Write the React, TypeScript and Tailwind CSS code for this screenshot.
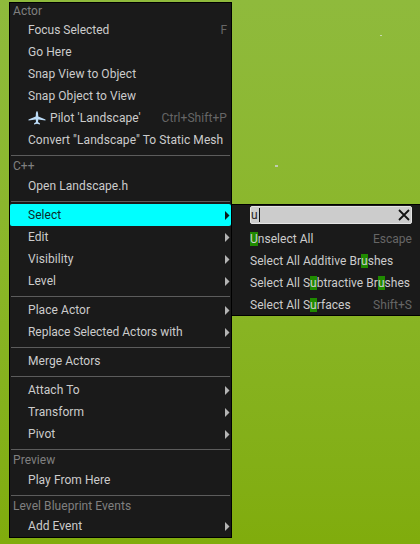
const font = "font-['Roboto','Liberation_Sans',sans-serif]";

function Arrow({ dark = false }: { dark?: boolean }) {
  return (
    <svg width="5" height="9" viewBox="0 0 5 9" className="absolute left-[215px] top-[7px]">
      <path d="M0 0 L4.5 4.5 L0 9 Z" fill={dark ? "#0a1a1a" : "#b4b4b4"} />
    </svg>
  );
}

function Plane() {
  return (
    <svg width="18" height="14" viewBox="0 0 18 14" className="mr-[4px]">
      <path
        d="M9 0 C9.8 0.6 10.2 2 10.2 4.2 L10.3 5.6 L17.5 8.4 L17.5 9.6 L10.3 8.6 L10 11 L12 12.6 L12 13.4 L9 12.8 L6 13.4 L6 12.6 L8 11 L7.7 8.6 L0.5 9.6 L0.5 8.4 L7.7 5.6 L7.8 4.2 C7.8 2 8.2 0.6 9 0 Z"
        fill="#bcdcf8"
      />
    </svg>
  );
}

function Header({ label, className = "h-4" }: { label: string; className?: string }) {
  return <div className={`pl-[3px] text-[12px] leading-[16px] tracking-[0.06px] text-[#808080] ${className}`}>{label}</div>;
}

function Sep({ cls = "mt-[4px] mb-[2px]" }: { cls?: string }) {
  return <div className={`mx-px h-px bg-[#5c5c5c] ${cls}`} />;
}

function Row({
  label,
  shortcut,
  sub,
  active,
  icon,
  tight,
}: {
  label: string;
  shortcut?: string;
  sub?: boolean;
  active?: boolean;
  icon?: boolean;
  tight?: boolean;
}) {
  return (
    <div
      className={`relative flex h-[22px] items-center pl-[18px] text-[12px] leading-[22px] ${
        tight ? "tracking-[-0.02px]" : "tracking-[0.06px]"
      } ${active ? "rounded-[2px] bg-[#00ffff] text-[#0c2a2a]" : "text-[#cccccc]"}`}
    >
      {icon && <Plane />}
      <span>{label}</span>
      {shortcut && <span className="ml-auto mr-[4px] text-[#666666]">{shortcut}</span>}
      {sub && <Arrow dark={active} />}
    </div>
  );
}

function Hit({ children }: { children: string }) {
  return <span className="bg-[#1f8a00] text-[#cccccc]">{children}</span>;
}

function SubRow({ children, shortcut }: { children: React.ReactNode; shortcut?: string }) {
  return (
    <div className="flex h-[22px] items-center justify-between pr-[2px] text-[12px] leading-[14px] tracking-[0.03px] text-[#cccccc]">
      <span>{children}</span>
      {shortcut && <span className="text-[#666666]">{shortcut}</span>}
    </div>
  );
}

export default function App() {
  return (
    <div
      className={`relative h-[544px] w-[420px] overflow-hidden bg-gradient-to-b from-[#8fba3c] via-[#8ab627] to-[#80ac0c] ${font}`}
    >
      <div className="absolute left-[380px] top-[35px] h-px w-[2px] bg-[#c8d8b0]" />
      <div className="absolute left-[275px] top-[165px] h-[2px] w-[3px] bg-[#c0ccb0]" />

      <div className="absolute left-[9px] top-[2px] h-[536px] w-[223px] border border-black bg-[#1a1a1a]">
        <Header label="Actor" />
        <Row label="Focus Selected" shortcut="F" tight />
        <Row label="Go Here" />
        <Row label="Snap View to Object" />
        <Row label="Snap Object to View" />
        <Row label="Pilot 'Landscape'" shortcut="Ctrl+Shift+P" icon />
        <Row label={'Convert "Landscape" To Static Mesh'} />
        <Sep />
        <Header label="C++" className="h-[17px]" />
        <Row label="Open Landscape.h" />
        <Sep />
        <Row label="Select" sub active />
        <Row label="Edit" sub />
        <Row label="Visibility" sub />
        <Row label="Level" sub />
        <Sep />
        <Row label="Place Actor" sub />
        <Row label="Replace Selected Actors with" sub tight />
        <Sep />
        <Row label="Merge Actors" />
        <Sep />
        <Row label="Attach To" sub />
        <Row label="Transform" sub />
        <Row label="Pivot" sub />
        <Sep />
        <Header label="Preview" className="h-[17px]" />
        <Row label="Play From Here" />
        <Sep />
        <Header label="Level Blueprint Events" className="h-[17px]" />
        <Row label="Add Event" sub />
      </div>

      <div className="absolute left-[232px] top-[204px] h-[112px] w-[188px] border-y border-black bg-[#1a1a1a] pl-[18px] pr-[6px] pt-[1px]">
        <div className="mb-[4px] flex h-[18px] w-[162px] items-center rounded-[2px] border border-[#e4e4e4] bg-[#cccccc] text-[12px] leading-[16px] text-[#222]">
          <span>u</span>
          <span className="ml-px h-[14px] w-px bg-[#111]" />
          <svg width="12" height="12" viewBox="0 0 12 12" className="ml-auto mr-[1px]">
            <path d="M1 1 L11 11 M11 1 L1 11" stroke="#111" strokeWidth="1.8" />
          </svg>
        </div>
        <SubRow shortcut="Escape">
          <Hit>U</Hit>nselect All
        </SubRow>
        <SubRow>
          Select All Additive Br<Hit>u</Hit>shes
        </SubRow>
        <SubRow>
          Select All S<Hit>u</Hit>btractive Br<Hit>u</Hit>shes
        </SubRow>
        <SubRow shortcut="Shift+S">
          Select All S<Hit>u</Hit>rfaces
        </SubRow>
      </div>
    </div>
  );
}
